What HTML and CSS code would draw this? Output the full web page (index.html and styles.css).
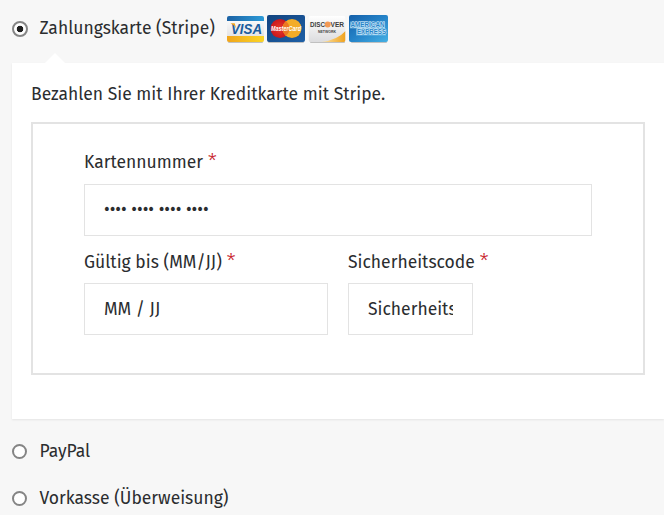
FILE: index.html
```html
<!DOCTYPE html>
<html lang="de">
<head>
	<meta charset="UTF-8">
	<meta name="viewport" content="width=device-width, initial-scale=1.0">
	<title>Zahlung</title>
	<link rel="stylesheet" href="styles.css">
</head>
<body>
	<ul class="payment_methods">
		<li class="method stripe">
			<input type="radio" name="payment_method" id="pay_stripe" checked>
			<label for="pay_stripe">Zahlungskarte (Stripe)</label>
			<svg class="cards" width="164" height="32" viewBox="0 0 164 32">
				<defs>
					<linearGradient id="visaTop" x1="0" x2="1"><stop offset="0" stop-color="#1c62a4"/><stop offset="1" stop-color="#2c9bd8"/></linearGradient>
					<linearGradient id="visaBottom" x1="0" x2="1"><stop offset="0" stop-color="#f0a51c"/><stop offset="1" stop-color="#fbd525"/></linearGradient>
					<linearGradient id="mc" x1="0" y1="0" x2="1" y2="1"><stop offset="0" stop-color="#12437f"/><stop offset="1" stop-color="#1e60a6"/></linearGradient>
					<radialGradient id="mcRed"><stop offset="0" stop-color="#e83a2c"/><stop offset="1" stop-color="#c9171e"/></radialGradient>
					<linearGradient id="plain" x1="0" y1="0" x2="0" y2="1"><stop offset="0" stop-color="#fff"/><stop offset="1" stop-color="#dcdcde"/></linearGradient>
					<linearGradient id="orange" x1="0" x2="1"><stop offset="0" stop-color="#fbe3a8"/><stop offset="1" stop-color="#f0a21c"/></linearGradient>
					<linearGradient id="amex" x1="0" y1="0" x2="1" y2="1"><stop offset="0" stop-color="#145fa9"/><stop offset=".5" stop-color="#2583c8"/><stop offset="1" stop-color="#45b0e4"/></linearGradient>
					<clipPath id="cardClip"><rect width="37" height="26" rx="2"/></clipPath>
				</defs>
				<g class="shadow">
					<rect x="2" y="28" width="35" height="2" rx="1"/>
					<rect x="42" y="28" width="36" height="2" rx="1"/>
					<rect x="84" y="28" width="35" height="2" rx="1"/>
					<rect x="125" y="28" width="36" height="2" rx="1"/>
				</g>
				<!-- visa -->
				<g transform="translate(1 3)" clip-path="url(#cardClip)">
					<rect width="37" height="26" fill="url(#plain)"/>
					<rect width="37" height="5" fill="url(#visaTop)"/>
					<rect y="20" width="37" height="6" fill="url(#visaBottom)"/>
					<text class="visa" x="4" y="17.7" textLength="31" lengthAdjust="spacingAndGlyphs">VISA</text>
					<path d="M3.5 7.3h4.2l1.6 5.5q-1.5-3.5-5.8-5.5z" fill="#f0a51c"/>
				</g>
				<!-- mastercard -->
				<g transform="translate(41 2)">
					<rect width="38" height="27" rx="2" fill="url(#mc)"/>
					<circle cx="13" cy="13.5" r="9.5" fill="url(#mcRed)"/>
					<circle cx="25" cy="13.5" r="9.5" fill="#f3ac27"/>
					<path d="M19 6.2a9.5 9.5 0 0 1 0 14.6a9.5 9.5 0 0 1 0-14.6z" fill="#ec7823"/>
					<text class="mastercard" x="4" y="16.3" textLength="30" lengthAdjust="spacingAndGlyphs">MasterCard</text>
				</g>
				<!-- discover -->
				<g transform="translate(82.5 3)" clip-path="url(#cardClip)">
					<rect width="37" height="26" fill="url(#plain)"/>
					<path d="M13 26Q29 24 37 15v11z" fill="url(#orange)"/>
					<circle cx="19.2" cy="8.5" r="3" fill="#f39a55"/>
					<text class="discover" x="1.5" y="11.3" textLength="15" lengthAdjust="spacingAndGlyphs">DISC</text>
					<text class="discover" x="22" y="11.3" textLength="13.5" lengthAdjust="spacingAndGlyphs">VER</text>
					<text class="network" x="9.5" y="16.6" textLength="18" lengthAdjust="spacingAndGlyphs">NETWORK</text>
				</g>
				<!-- american express -->
				<g transform="translate(123 2)">
					<rect width="39" height="27" rx="2" fill="url(#amex)"/>
					<path d="M1 6.5h35v7h1v7H7v-7H1z" fill="#8ccbee" opacity=".6"/>
					<text class="amex" x="1.5" y="12.4" textLength="34" lengthAdjust="spacingAndGlyphs">AMERICAN</text>
					<text class="amex" x="8" y="19.4" textLength="29" lengthAdjust="spacingAndGlyphs">EXPRESS</text>
				</g>
			</svg>
		</li>
		<li class="payment_box">
			<p>Bezahlen Sie mit Ihrer Kreditkarte mit Stripe.</p>
			<fieldset class="card_form">
				<div class="field">
					<label for="number">Kartennummer <span class="required">*</span></label>
					<input type="text" id="number" class="number" placeholder="•••• •••• •••• ••••">
				</div>
				<div class="row">
					<div class="field expiry">
						<label for="expiry">Gültig bis (MM/JJ) <span class="required">*</span></label>
						<input type="text" id="expiry" placeholder="MM / JJ">
					</div>
					<div class="field cvc">
						<label for="cvc">Sicherheitscode <span class="required">*</span></label>
						<input type="text" id="cvc" placeholder="Sicherheitscode">
					</div>
				</div>
			</fieldset>
		</li>
		<li class="method paypal">
			<input type="radio" name="payment_method" id="pay_paypal">
			<label for="pay_paypal">PayPal</label>
		</li>
		<li class="method">
			<input type="radio" name="payment_method" id="pay_bacs">
			<label for="pay_bacs">Vorkasse (Überweisung)</label>
		</li>
	</ul>
</body>
</html>
```
FILE: styles.css
```css
* {box-sizing:border-box;}
body {margin:0; height:515px; overflow:hidden; background-color:#f7f7f7; color:#2b2d2f; font-family:"Fira Sans", "Noto Sans", sans-serif; font-size:17.5px; line-height:28px;}
ul {list-style:none; padding:0; margin:0;}
p {margin:0;}
.payment_methods {padding-left:12px;}

.method {display:flex; align-items:center; height:47px;}
.method.stripe {height:63px; padding-bottom:5px;}
.method.paypal {margin-top:9px;}
.method input {appearance:none; flex:none; width:15px; height:15px; margin:0 12.5px 0 0; border:2px solid #858585; border-radius:50%; background-color:#fff;}
.method input:checked {width:16px; height:16px; margin:0 11.5px 0 0; background-image:radial-gradient(circle, #1e1e1e 3px, transparent 3.6px);}
.cards {flex:none; margin-left:11px;}

/* card logos */
.cards text {font-family:"Liberation Sans", sans-serif; font-weight:bold;}
.cards .shadow {fill:#000; opacity:.22;}
.cards .visa {font-size:15.5px; font-style:italic; fill:#1a5c9e;}
.cards .mastercard {font-size:7px; font-style:italic; fill:#fff;}
.cards .discover {font-size:7.5px; fill:#3c3c3c;}
.cards .network {font-size:4px; fill:#444;}
.cards .amex {font-size:7px; fill:#2583c8; stroke:#e2f4fd; stroke-width:.9px; paint-order:stroke;}

.payment_box {position:relative; height:356px; padding:18px 19px 0; background-color:#fff; box-shadow:0 1px 2px rgba(0,0,0,.08);}
.payment_box::before {content:""; position:absolute; left:33px; top:-10px; border:10px solid transparent; border-top:0; border-bottom-color:#fff;}
.card_form {height:253px; margin:13px 0 0; padding:25px 51px 0; border:2px solid #e3e3e3;}
.field label {display:block; height:35px;}
.field input {display:block; width:100%; height:52px; padding:0 19px; border:1px solid #e3e3e3; border-radius:0; background-color:#fff; font:inherit;}
.field input::placeholder {color:#2b2d2f; opacity:1;}
.field .number {padding-bottom:2px;}
.row {display:flex; gap:20px; margin-top:13px;}
.row label {height:34px;}
.expiry {width:244px;}
.cvc input {width:125px;}
.required {color:#c8232c; font-size:21px; font-weight:300; line-height:1;}
```
